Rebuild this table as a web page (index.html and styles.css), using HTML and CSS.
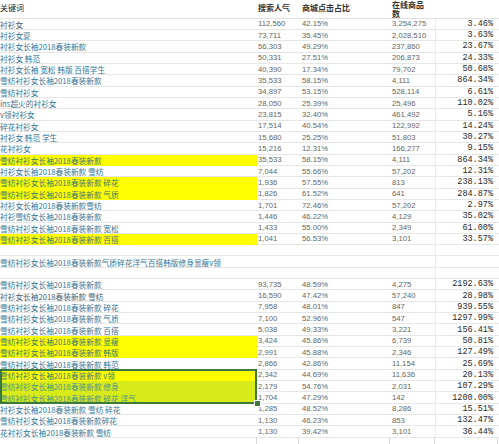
FILE: index.html
```html
<!DOCTYPE html>
<html lang="zh">
<head>
<meta charset="utf-8">
<title>关键词</title>
<link rel="stylesheet" href="styles.css">
</head>
<body>
<div class="sheet">
  <div class="row head">
    <div class="c kw">关键词</div>
    <div class="c n1 hd">搜索人气</div>
    <div class="c n2 hd">商城点击占比</div>
    <div class="c n3 hd two">在线商品<br>数</div>
    <div class="c r"></div>
  </div>
  <div class="row"><div class="c kw gray">衬衫女</div><div class="c n1">112,560</div><div class="c n2">42.15%</div><div class="c n3">3,254,275</div><div class="c r">3.46%</div></div>
  <div class="row"><div class="c kw">衬衫女夏</div><div class="c n1">73,711</div><div class="c n2">35.45%</div><div class="c n3">2,028,510</div><div class="c r">3.63%</div></div>
  <div class="row"><div class="c kw">衬衫女长袖2018春装新款</div><div class="c n1">56,303</div><div class="c n2">49.29%</div><div class="c n3">237,860</div><div class="c r">23.67%</div></div>
  <div class="row"><div class="c kw">衬衫女 韩范</div><div class="c n1">50,331</div><div class="c n2">27.51%</div><div class="c n3">206,873</div><div class="c r">24.33%</div></div>
  <div class="row"><div class="c kw">衬衫女长袖 宽松 韩版 百搭学生</div><div class="c n1">40,390</div><div class="c n2">17.34%</div><div class="c n3">79,702</div><div class="c r">50.68%</div></div>
  <div class="row"><div class="c kw">雪纺衬衫女长袖2018春装新款</div><div class="c n1">35,533</div><div class="c n2">58.15%</div><div class="c n3">4,111</div><div class="c r">864.34%</div></div>
  <div class="row"><div class="c kw">雪纺衬衫女</div><div class="c n1">34,897</div><div class="c n2">53.15%</div><div class="c n3">528,114</div><div class="c r">6.61%</div></div>
  <div class="row"><div class="c kw">ins超火的衬衫女</div><div class="c n1">28,050</div><div class="c n2">25.39%</div><div class="c n3">25,496</div><div class="c r">110.02%</div></div>
  <div class="row"><div class="c kw">v领衬衫女</div><div class="c n1">23,815</div><div class="c n2">32.40%</div><div class="c n3">461,492</div><div class="c r">5.16%</div></div>
  <div class="row"><div class="c kw">碎花衬衫女</div><div class="c n1">17,514</div><div class="c n2">40.54%</div><div class="c n3">122,992</div><div class="c r">14.24%</div></div>
  <div class="row"><div class="c kw">衬衫女 韩范 学生</div><div class="c n1">15,680</div><div class="c n2">25.25%</div><div class="c n3">51,803</div><div class="c r">30.27%</div></div>
  <div class="row"><div class="c kw">花衬衫女</div><div class="c n1">15,216</div><div class="c n2">12.31%</div><div class="c n3">166,277</div><div class="c r">9.15%</div></div>
  <div class="row"><div class="c kw yel">雪纺衬衫女长袖2018春装新款</div><div class="c n1">35,533</div><div class="c n2">58.15%</div><div class="c n3">4,111</div><div class="c r">864.34%</div></div>
  <div class="row"><div class="c kw">衬衫女长袖2018春装新款 雪纺</div><div class="c n1">7,044</div><div class="c n2">55.66%</div><div class="c n3">57,202</div><div class="c r">12.31%</div></div>
  <div class="row"><div class="c kw yel">雪纺衬衫女长袖2018春装新款 碎花</div><div class="c n1">1,936</div><div class="c n2">57.55%</div><div class="c n3">813</div><div class="c r">238.13%</div></div>
  <div class="row"><div class="c kw yel">雪纺衬衫女长袖2018春装新款 气质</div><div class="c n1">1,826</div><div class="c n2">61.52%</div><div class="c n3">641</div><div class="c r">284.87%</div></div>
  <div class="row"><div class="c kw">衬衫女长袖2018春装新款雪纺</div><div class="c n1">1,701</div><div class="c n2">72.46%</div><div class="c n3">57,202</div><div class="c r">2.97%</div></div>
  <div class="row"><div class="c kw">衬衫雪纺女长袖2018春装新款</div><div class="c n1">1,446</div><div class="c n2">46.22%</div><div class="c n3">4,129</div><div class="c r">35.02%</div></div>
  <div class="row"><div class="c kw">雪纺衬衫女长袖2018春装新款 宽松</div><div class="c n1">1,433</div><div class="c n2">55.00%</div><div class="c n3">2,349</div><div class="c r">61.00%</div></div>
  <div class="row"><div class="c kw yel">雪纺衬衫女长袖2018春装新款 百搭</div><div class="c n1">1,041</div><div class="c n2">56.53%</div><div class="c n3">3,101</div><div class="c r">33.57%</div></div>
  <div class="row"><div class="c kw"></div><div class="c n1"></div><div class="c n2"></div><div class="c n3"></div><div class="c r"></div></div>
  <div class="row"><div class="c kw">雪纺衬衫女长袖2018春装新款气质碎花洋气百搭韩版修身显瘦v领</div><div class="c n1"></div><div class="c n2"></div><div class="c n3"></div><div class="c r"></div></div>
  <div class="row"><div class="c kw"></div><div class="c n1"></div><div class="c n2"></div><div class="c n3"></div><div class="c r"></div></div>
  <div class="row"><div class="c kw">雪纺衬衫女长袖2018春装新款</div><div class="c n1">93,735</div><div class="c n2">48.59%</div><div class="c n3">4,275</div><div class="c r">2192.63%</div></div>
  <div class="row"><div class="c kw gray">衬衫女长袖2018春装新款 雪纺</div><div class="c n1">16,590</div><div class="c n2">47.42%</div><div class="c n3">57,240</div><div class="c r">28.98%</div></div>
  <div class="row"><div class="c kw">雪纺衬衫女长袖2018春装新款 碎花</div><div class="c n1">7,958</div><div class="c n2">48.01%</div><div class="c n3">847</div><div class="c r">939.55%</div></div>
  <div class="row"><div class="c kw">雪纺衬衫女长袖2018春装新款 气质</div><div class="c n1">7,100</div><div class="c n2">52.96%</div><div class="c n3">547</div><div class="c r">1297.99%</div></div>
  <div class="row"><div class="c kw">雪纺衬衫女长袖2018春装新款 百搭</div><div class="c n1">5,038</div><div class="c n2">49.33%</div><div class="c n3">3,221</div><div class="c r">156.41%</div></div>
  <div class="row"><div class="c kw yel">雪纺衬衫女长袖2018春装新款 显瘦</div><div class="c n1">3,424</div><div class="c n2">45.86%</div><div class="c n3">6,739</div><div class="c r">50.81%</div></div>
  <div class="row"><div class="c kw yel">雪纺衬衫女长袖2018春装新款 韩版</div><div class="c n1">2,991</div><div class="c n2">45.88%</div><div class="c n3">2,346</div><div class="c r">127.49%</div></div>
  <div class="row"><div class="c kw">雪纺衬衫女长袖2018春装新款 韩范</div><div class="c n1">2,866</div><div class="c n2">42.86%</div><div class="c n3">11,154</div><div class="c r">25.69%</div></div>
  <div class="sel">
    <div class="row"><div class="c kw yel">雪纺衬衫女长袖2018春装新款 v领</div><div class="c n1">2,342</div><div class="c n2">44.69%</div><div class="c n3">11,636</div><div class="c r">20.13%</div></div>
    <div class="row"><div class="c kw selyel">雪纺衬衫女长袖2018春装新款 修身</div><div class="c n1">2,179</div><div class="c n2">54.76%</div><div class="c n3">2,031</div><div class="c r">107.29%</div></div>
    <div class="row"><div class="c kw selyel">雪纺衬衫女长袖2018春装新款 碎花 洋气</div><div class="c n1">1,704</div><div class="c n2">47.29%</div><div class="c n3">142</div><div class="c r">1200.00%</div></div>
    <div class="box"></div>
    <div class="handle"></div>
  </div>
  <div class="row"><div class="c kw">衬衫女长袖2018春装新款 雪纺 碎花</div><div class="c n1">1,285</div><div class="c n2">48.52%</div><div class="c n3">8,286</div><div class="c r">15.51%</div></div>
  <div class="row"><div class="c kw">雪纺衬衫女长袖2018春装新款碎花</div><div class="c n1">1,130</div><div class="c n2">46.23%</div><div class="c n3">853</div><div class="c r">132.47%</div></div>
  <div class="row"><div class="c kw">花衬衫女长袖2018春装新款 雪纺</div><div class="c n1">1,130</div><div class="c n2">39.42%</div><div class="c n3">3,101</div><div class="c r">36.44%</div></div>
  <div class="row empty"><div class="c kw"></div><div class="c n1"></div><div class="c n2"></div><div class="c n3"></div><div class="c r"></div></div>
</div>
</body>
</html>
```
FILE: styles.css
```css
html, body {
  margin: 0;
  padding: 0;
  background: #fff;
}
.sheet {
  width: 499px;
  font-family: "Noto Sans CJK SC", "Noto Sans", sans-serif;
  font-size: 8px;
}
.row {
  display: grid;
  grid-template-columns: 257px 42px 91px 45px 63px;
  height: 11.34px;
  box-sizing: border-box;
  border-bottom: 1px solid #e6e6e6;
  align-items: center;
}
.row.head {
  height: 18.6px;
  align-items: start;
  border-bottom: 1px solid #e2e2e2;
}
.c {
  white-space: nowrap;
  height: 100%;
  display: flex;
  align-items: center;
  box-sizing: border-box;
}
.head .c {
  color: #222;
  align-items: flex-start;
  padding-top: 3px;
  line-height: 10px;
}
.head .hd {
  font-family: "Noto Sans CJK SC", sans-serif;
  font-size: 8px;
  font-weight: 700;
  color: #333;
}
.head .two {
  padding-top: 1px;
  line-height: 8.6px;
  display: block;
}
.kw {
  color: #367595;
  font-size: 7.7px;
  overflow: visible;
  position: relative;
  z-index: 1;
  margin-bottom: -1px;
  height: calc(100% + 1px);
  line-height: 11px;
}
.head .kw {
  margin-bottom: 0;
  height: 100%;
  color: #222;
  font-size: 8px;
}
.kw.gray {
  color: #4a5e6c;
}
.kw.yel {
  background: #ffff00;
  color: #3a7676;
}
.kw.selyel {
  background: #d8ea18;
  color: #4a968a;
}
.n1, .n2, .n3 {
  font-family: "Liberation Sans", Arial, sans-serif;
  font-size: 7.7px;
  color: #666;
}
.n1 { padding-left: 1px; }
.n2 { padding-left: 3px; }
.n3 { padding-left: 2px; }
.r {
  font-family: "Liberation Mono", "DejaVu Sans Mono", monospace;
  font-size: 8.5px;
  color: #2a2a2a;
  justify-content: flex-end;
  padding-right: 5px;
  border-left: 1px solid #ececec;
}
.head .r {
  border-left: none;
}
.sel {
  position: relative;
}
.sel .box {
  position: absolute;
  left: 0;
  top: -1px;
  width: 257px;
  height: calc(100% + 1px);
  box-sizing: border-box;
  border: 2px solid #3b7a3a;
  z-index: 2;
}
.sel .handle {
  position: absolute;
  left: 254px;
  bottom: -3px;
  width: 5px;
  height: 5px;
  background: #3b7a3a;
  border: 1px solid #fff;
  z-index: 3;
}
.row.empty {
  border-bottom: none;
}
.row.empty .c {
  border-right: 1px solid #d8d8d8;
}
.row.empty .r {
  border-left: none;
}
```
